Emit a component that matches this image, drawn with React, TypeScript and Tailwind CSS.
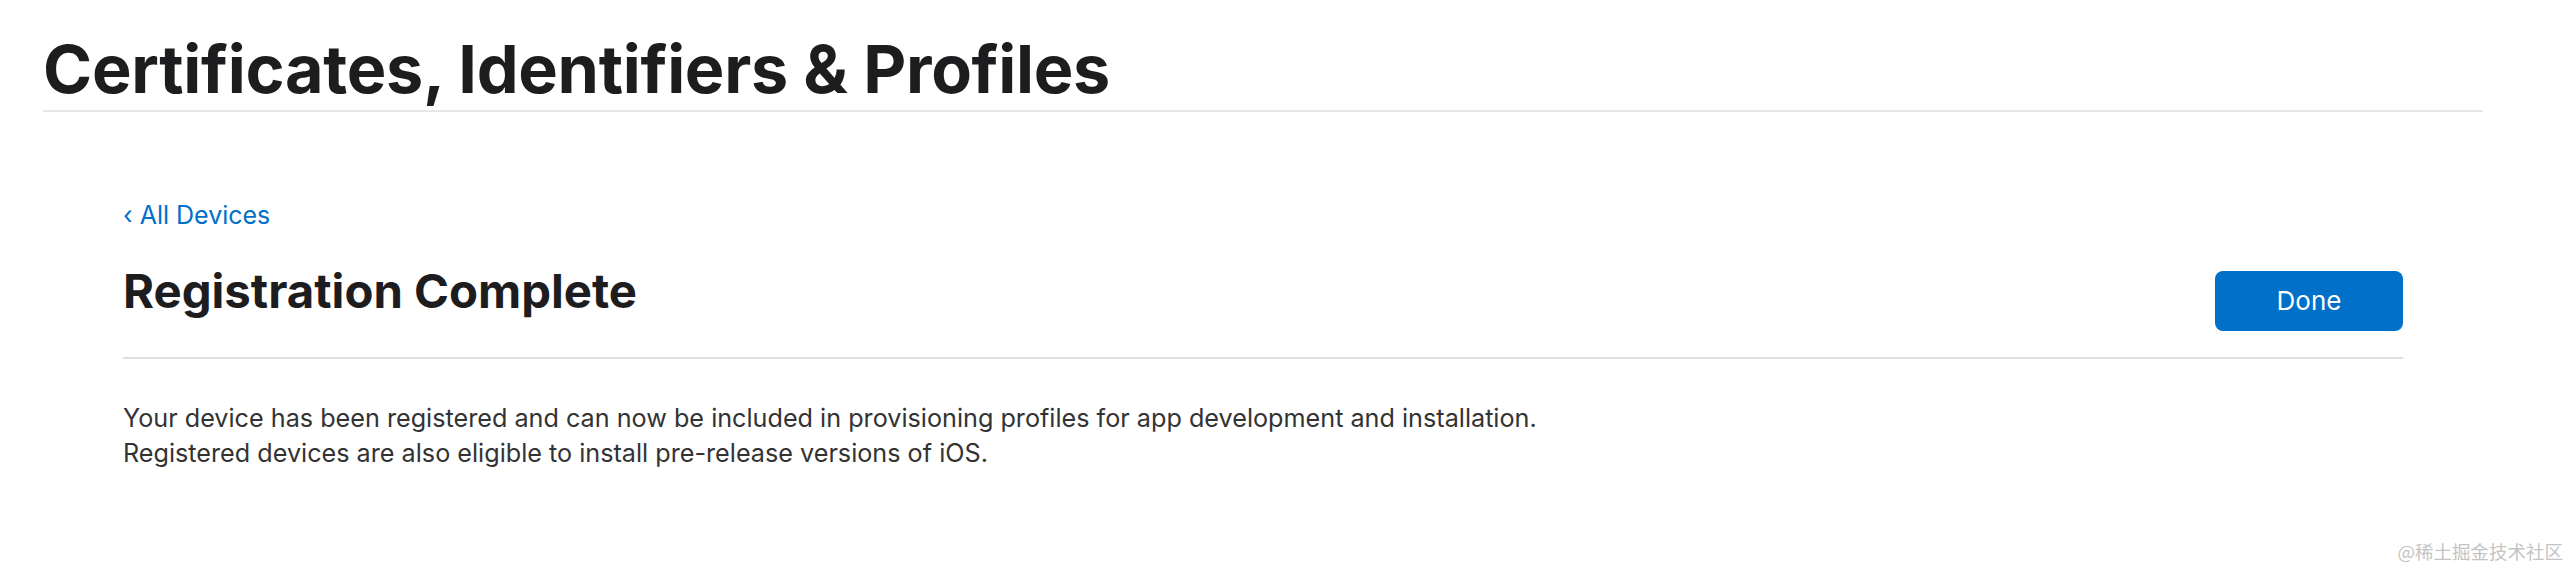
export default function App() {
  return (
    <div className="relative w-[2572px] h-[566px] bg-white font-['Inter',sans-serif] text-[#1d1d1f] overflow-hidden">
      <div className="pl-[43px] pr-[89px] pt-[36px]">
        {/* page header */}
        <h1 className="text-[66.5px] leading-none font-bold tracking-[-0.3px] pb-[7px] border-b-2 border-[#e6e6e6]">
          Certificates, Identifiers &amp; Profiles
        </h1>

        <div className="px-[80px]">
          <a className="block mt-[91px] text-[25px] leading-none text-[#0070c9]">‹ All Devices</a>

          <div className="mt-[39px] flex items-start justify-between">
            <h2 className="text-[47.3px] leading-none font-bold">Registration Complete</h2>
            <button className="mt-[4px] w-[188px] h-[60px] rounded-[8px] bg-[#0070c9] text-white text-[26px]">
              Done
            </button>
          </div>

          <div className="mt-[26px] h-[2px] bg-[#e0e0e0]" />

          <p className="mt-[42px] text-[25.2px] leading-[35px] text-[#333333]">
            Your device has been registered and can now be included in provisioning profiles for app development and installation.
            <br />
            Registered devices are also eligible to install pre-release versions of iOS.
          </p>
        </div>
      </div>

      <div className="absolute right-[9px] bottom-[6px] text-[18.5px] leading-none text-[#c4c4c4] font-['Noto_Sans_CJK_SC',sans-serif]">
        @稀土掘金技术社区
      </div>
    </div>
  )
}
